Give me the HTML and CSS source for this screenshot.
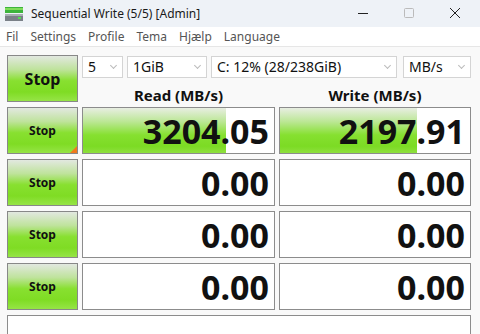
FILE: index.html
```html
<!DOCTYPE html>
<html>
  <head>
    <meta charset="utf-8" />
    <title>Sequential Write (5/5) [Admin]</title>
    <link rel="stylesheet" href="styles.css">
  </head>
  <body>
    <!-- title bar -->
    <div class="titlebar">
      <svg class="app-icon" width="18" height="14" viewBox="0 0 18 14">
        <rect x="0" y="0" width="18" height="6" fill="#3cb43c" />
        <rect x="0" y="1" width="18" height="2" fill="#7fdc5a" />
        <rect x="0" y="7" width="18" height="7" fill="#7a8088" />
        <rect x="0" y="7" width="18" height="2" fill="#a8aeb4" />
        <rect x="13" y="10" width="3" height="2" fill="#50e050" />
      </svg>
      <span class="title">Sequential Write (5/5) [Admin]</span>
      <div class="win-btns">
        <svg width="46" height="27" viewBox="0 0 46 27"><path d="M18 13.5h10" stroke="#222" stroke-width="1" /></svg>
        <svg width="46" height="27" viewBox="0 0 46 27"><rect x="18.5" y="8.5" width="9" height="9" rx="1" fill="none" stroke="#bbb" /></svg>
        <svg width="46" height="27" viewBox="0 0 46 27"><path d="M18 8l10 10M28 8l-10 10" stroke="#222" stroke-width="1" /></svg>
      </div>
    </div>
    <!-- menu -->
    <div class="menubar">
      <span>Fil</span>
      <span>Settings</span>
      <span>Profile</span>
      <span>Tema</span>
      <span>Hjælp</span>
      <span>Language</span>
    </div>
    <!-- main -->
    <div class="main">
      <div class="btn big">Stop</div>
      <div class="top">
        <div class="selects">
          <div class="sel s-count">5<i></i></div>
          <div class="sel s-size">1GiB<i></i></div>
          <div class="sel s-drive">C: 12% (28/238GiB)<i></i></div>
          <div class="sel s-unit">MB/s<i></i></div>
        </div>
        <div class="heads">
          <div class="head">Read (MB/s)</div>
          <div class="head">Write (MB/s)</div>
        </div>
      </div>

      <div class="btn active">Stop</div>
      <div class="val"><div class="bar" style="width: 75%"></div><span>3204.05</span></div>
      <div class="val"><div class="bar" style="width: 72%"></div><span>2197.91</span></div>

      <div class="btn">Stop</div>
      <div class="val"><span>0.00</span></div>
      <div class="val"><span>0.00</span></div>

      <div class="btn">Stop</div>
      <div class="val"><span>0.00</span></div>
      <div class="val"><span>0.00</span></div>

      <div class="btn">Stop</div>
      <div class="val"><span>0.00</span></div>
      <div class="val"><span>0.00</span></div>

      <div class="comment"></div>
    </div>
  </body>
</html>
```

FILE: styles.css
```css
body {
  margin: 0;
  padding: 0;
  background-color: #f9f9f9;
  font-family: "Noto Sans", "Open Sans", sans-serif;
  color: #111;
  overflow: hidden;
  height: 334px;
}
.titlebar {
  height: 27px;
  display: flex;
  align-items: center;
  background-color: #eef2f7;
}
.app-icon {
  margin-left: 5px;
  margin-right: 8px;
}
.title {
  font-size: 12px;
  color: #1a1a1a;
}
.win-btns {
  margin-left: auto;
  display: flex;
  margin-right: 2px;
}
.win-btns svg {
  display: block;
}
.menubar {
  height: 19px;
  display: flex;
  align-items: center;
  gap: 12px;
  padding-left: 6px;
  background-color: #ffffff;
  border-bottom: 1px solid #e6e6e6;
  font-size: 12px;
  color: #555;
}
.main {
  display: grid;
  grid-template-columns: 71px 193px 192px;
  grid-auto-rows: 47px;
  column-gap: 4px;
  row-gap: 5px;
  padding: 8px 0 0 7px;
}
.btn {
  box-sizing: border-box;
  border: 1px solid #888;
  background: linear-gradient(to bottom, #e2e8e0 0%, #bfe39c 30%, #88e030 55%, #7fdc24 80%, #96e446 100%);
  display: flex;
  justify-content: center;
  align-items: center;
  font-weight: bold;
  font-size: 12px;
  position: relative;
}
.btn.big {
  font-size: 16px;
}
.btn.active::after {
  content: "";
  position: absolute;
  right: 0;
  bottom: 0;
  border-style: solid;
  border-width: 0 0 7px 7px;
  border-color: transparent transparent #f07a1e transparent;
}
.top {
  grid-column: 2 / 4;
  display: flex;
  flex-direction: column;
}
.selects {
  display: flex;
  margin-top: 1px;
  height: 22px;
  gap: 4px;
}
.sel {
  box-sizing: border-box;
  border: 1px solid #d4d4d4;
  background-color: #fff;
  font-size: 14px;
  line-height: 20px;
  padding-left: 5px;
  position: relative;
  color: #111;
}
.sel i {
  position: absolute;
  right: 6px;
  top: 6px;
  width: 4px;
  height: 4px;
  border-right: 1px solid #bbb;
  border-bottom: 1px solid #bbb;
  transform: rotate(45deg);
}
.s-count { width: 41px; }
.s-size { width: 80px; }
.s-drive { width: 186px; }
.s-unit { width: 68px; margin-left: 2px; }
.heads {
  display: flex;
  gap: 4px;
  margin-top: 5px;
}
.head {
  flex: 1;
  text-align: center;
  font-weight: bold;
  font-size: 15px;
  line-height: 24px;
}
.head:first-child {
  flex: 0 0 193px;
}
.val {
  box-sizing: border-box;
  border: 1px solid #8c8c8c;
  background-color: #fff;
  position: relative;
  display: flex;
  justify-content: flex-end;
  align-items: center;
  padding-right: 5px;
  font-weight: bold;
  font-size: 34px;
}
.val span {
  position: relative;
}
.bar {
  position: absolute;
  left: 0;
  top: 0;
  bottom: 0;
  background: linear-gradient(to bottom, #e8eee2 0%, #bce796 30%, #86e030 60%, #7cdb24 85%, #8ee03e 100%);
}
.comment {
  grid-column: 1 / 4;
  border: 1px solid #8c8c8c;
  border-bottom: none;
  background-color: #fff;
  height: 18px;
}
```
